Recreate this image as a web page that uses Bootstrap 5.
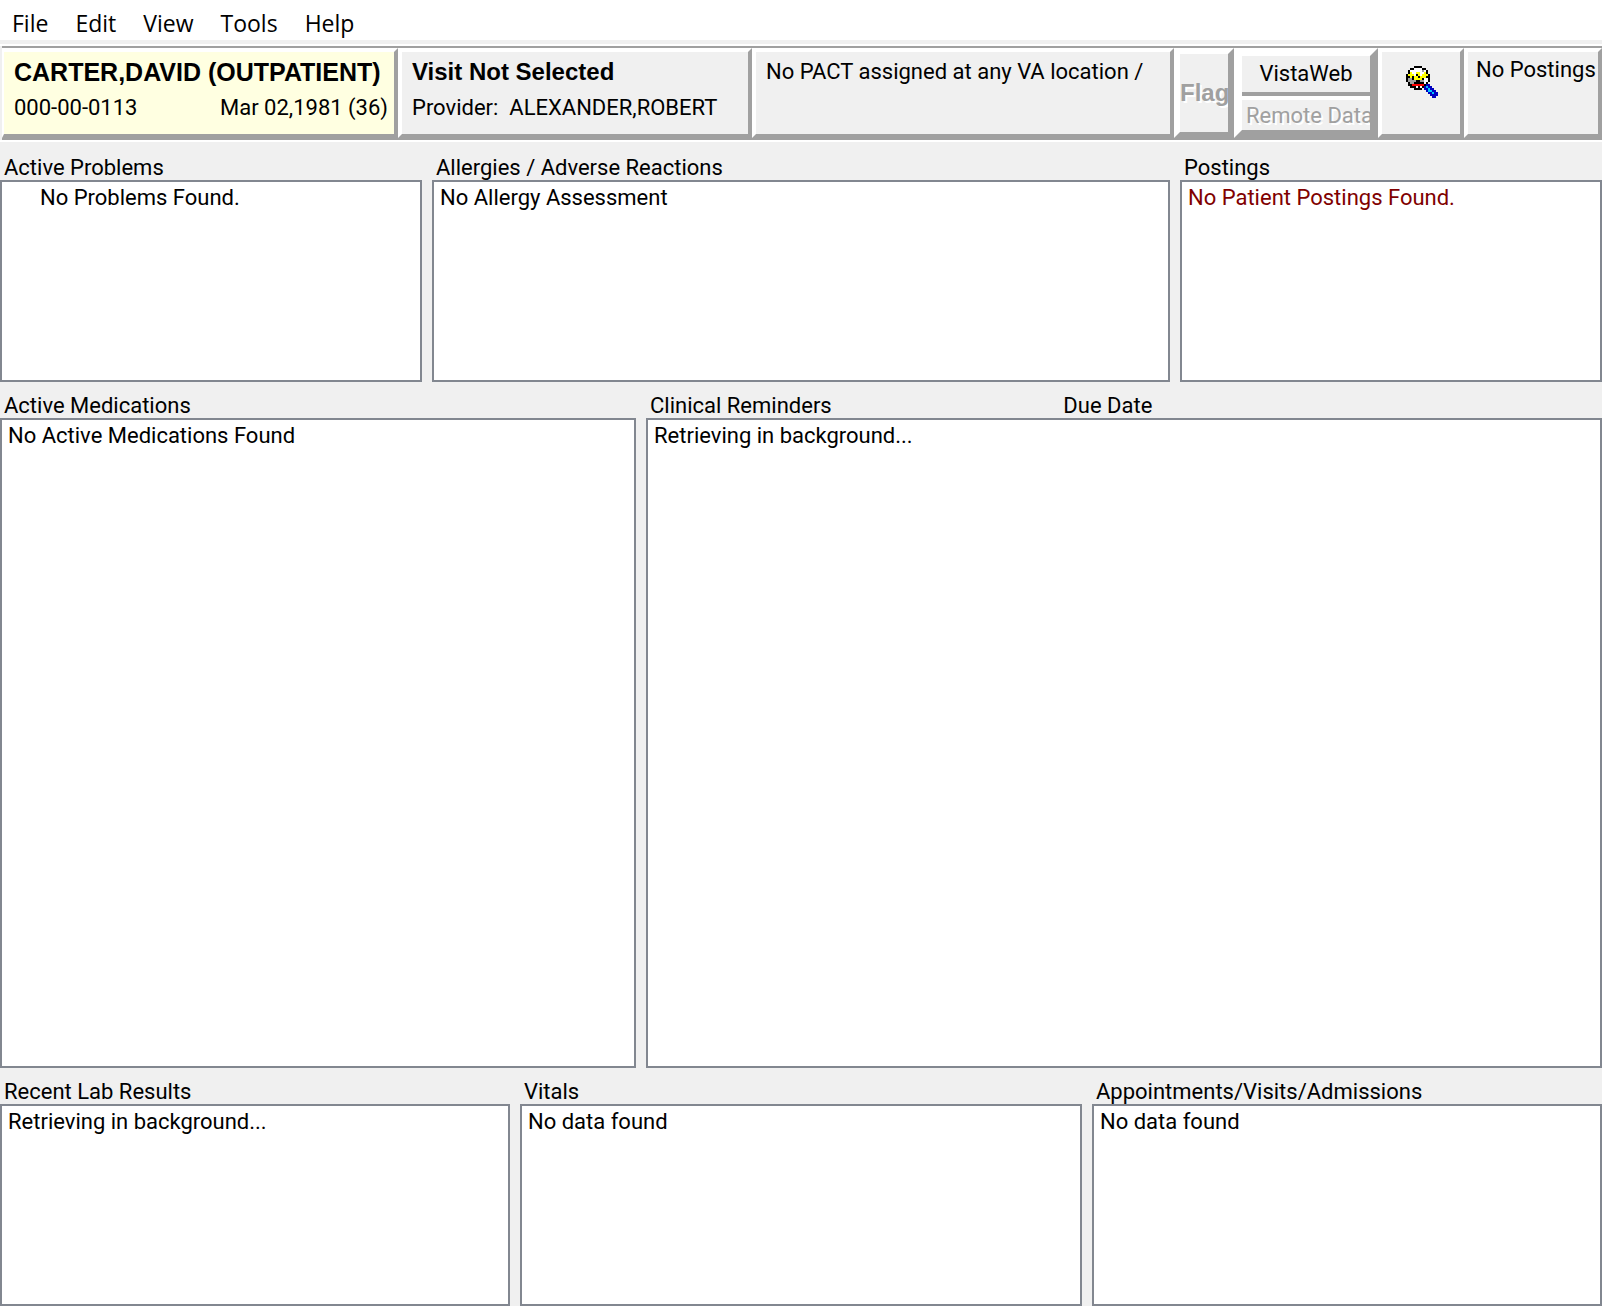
<!DOCTYPE html>
<html lang="en">
<head>
<meta charset="utf-8">
<meta name="viewport" content="width=device-width, initial-scale=1">
<title>Patient Chart - Cover Sheet</title>
<link rel="stylesheet" href="https://cdn.jsdelivr.net/npm/bootstrap@5.3.0/dist/css/bootstrap.min.css">
<style>
  body { background: #f0f0f0; color: #000; font-family: Roboto, "Liberation Sans", sans-serif; font-size: 22px; line-height: 28px; }
  .menu-bar { background: #fff; height: 40px; font-family: "Open Sans", sans-serif; font-size: 23px; line-height: 32px; padding: 7px 0 0 12px; gap: 27px; }
  .menu-bar a { color: #000; text-decoration: none; }
  .chart-bar { margin-top: 4px; border-top: 2px solid #fff; border-bottom: 2px solid #fff; }
  .chart-strip { border-top: 2px solid #a0a0a0; border-bottom: 2px solid #a0a0a0; height: 94px; margin-left: 2px; }
  .bevel { background: #f0f0f0; color: #000; border: 4px solid; border-color: #fff #a0a0a0 #a0a0a0 #fff; padding: 2px 10px 0; text-align: left; line-height: 36px; overflow: hidden; white-space: nowrap; flex: none; }
  .patient { background: #ffffe1; width: 396px; border-left-width: 2px; padding-right: 6px; }
  .visit { width: 354px; }
  .pact { flex: 1 1 0; }
  .strong-line { font-family: "Liberation Sans", sans-serif; font-weight: 700; font-size: 24px; }
  .patient-name { font-size: 25px; }
  .flag { width: 60px; border-width: 6px; padding: 0; }
  .remote { width: 144px; border-width: 8px; padding: 0; }
  .remote button { border: 0 solid; background: transparent; color: #000; padding: 0; width: 100%; overflow: hidden; white-space: nowrap; }
  .remote .web { border-bottom: 4px solid #a0a0a0; height: 40px; line-height: 36px; }
  .remote .data { border-top: 4px solid #fff; height: 34px; line-height: 32px; padding-left: 4px; text-align: left; }
  .bevel:disabled, .remote .data:disabled { color: #a0a0a0; text-shadow: 2px 2px 0 #fff; }
  .find { width: 86px; padding: 0 8px 0 10px; }
  .post { width: 138px; padding: 0 0 0 8px; }
  .pane { min-width: 0; display: flex; flex-direction: column; }
  .pane-title { font-size: 22px; line-height: 24px; font-weight: 400; margin: 0; height: 36px; padding-left: 4px; display: flex; align-items: flex-end; }
  .first .pane-title { height: 38px; }
  .pane-title span { flex: 1 1 0; }
  .pane-title .reminder { flex: 0 0 43%; margin-right: 4px; }
  .pane-box { background: #fff; border: 2px solid #828790; height: 202px; margin: 0; padding: 2px 6px; list-style: none; }
  .panes { gap: 10px; }
  .panes.grow .pane-box { height: auto; flex: 1 1 auto; }
  .grow { flex: 1 1 auto; }
  .w-side { flex: 422 1 0; } .w-mid { flex: 738 1 0; }
  .w-meds { flex: 636 1 0; } .w-rem { flex: 956 1 0; }
  .w-low { flex: 510 1 0; } .w-vit { flex: 562 1 0; }
  .dark-red { color: #800000; }
</style>
</head>
<body>
<div class="d-flex flex-column min-vh-100">
  <nav class="menu-bar d-flex" aria-label="Main menu">
    <a href="#">File</a><a href="#">Edit</a><a href="#">View</a><a href="#">Tools</a><a href="#">Help</a>
  </nav>
  <header class="chart-bar">
    <div class="chart-strip d-flex align-items-stretch">
      <button class="bevel patient d-flex flex-column" type="button">
        <span class="strong-line patient-name">CARTER,DAVID (OUTPATIENT)</span>
        <span class="d-flex justify-content-between w-100"><span>000-00-0113</span><span>Mar 02,1981 (36)</span></span>
      </button>
      <button class="bevel visit d-flex flex-column" type="button">
        <span class="strong-line">Visit Not Selected</span>
        <span>Provider: &nbsp;ALEXANDER,ROBERT</span>
      </button>
      <button class="bevel pact d-flex" type="button">No PACT assigned at any VA location /</button>
      <button class="bevel flag strong-line" type="button" disabled>Flag</button>
      <div class="bevel remote">
        <button class="web d-block" type="button">VistaWeb</button>
        <button class="data d-block" type="button" disabled>Remote Data</button>
      </div>
      <button class="bevel find d-flex justify-content-center" type="button" aria-label="Patient inquiry">
        <svg class="mt-2 flex-shrink-0" width="32" height="48" viewBox="0 -3 16 24" shape-rendering="crispEdges">
          <!-- lens -->
          <path fill="#fff" d="M3 1h6v1h1v2h1v5h-1v1h-1v1h-6v-1h-1v-1h-1v-5h1v-2h1z"/>
          <path d="M4 0h4v1H4zM2 1h2v1H2zM8 1h2v1H8zM1 2h1v2H1zM10 2h1v2h-1zM0 4h1v4H0zM11 4h1v4h-1zM1 8h1v2H1zM10 8h1v1h-1zM2 10h2v1H2zM8 10h1v1H8zM4 11h4v1H4z"/>
          <!-- face -->
          <path fill="#a0a0a0" d="M1 6h2v2H1zM9 5h1v1H9zM3 7h2v1H3zM7 7h2v1H7zM2 8h2v1H2zM8 2h1v1H8z"/>
          <path fill="#ff0" d="M2 3h1v1H2zM5 3h2v1H5zM9 3h1v1H9zM1 4h3v1H1zM5 4h2v1H5zM8 4h3v1H8zM2 5h8v1H2zM4 6h4v1H4z"/>
          <path d="M5 4h1v1H5zM3 5h1v1H3zM6 5h1v1H6zM1 5h1v1H1zM10 5h1v1h-1zM3 6h1v1H3zM8 6h1v1H8zM5 7h2v1H5zM4 8h5v1H4zM2 9h1v1H2zM9 9h1v1H9zM3 10h2v1H3zM6 10h1v1H6z"/>
          <path fill="#f00" d="M3 9h6v1H3z"/>
          <!-- handle -->
          <path fill="#0000c0" d="M10 9h2v1h1v1h1v1h1v1h1v2h-1v1h-2v-1h-1v-1h-1v-1h-1v-1h-1v-2h1z"/>
          <path fill="#00c8ff" d="M10 10h1v1h-1zM11 11h1v1h-1zM11 12h1v1h-1zM12 12h1v1h-1zM13 13h1v1h-1z"/>
        </svg>
      </button>
      <button class="bevel post d-flex" type="button">No Postings</button>
    </div>
  </header>
  <main class="grow d-flex flex-column">
    <div class="panes first d-flex">
      <section class="pane w-side"><h2 class="pane-title">Active Problems</h2><ul class="pane-box"><li class="ps-4 ms-2">No Problems Found.</li></ul></section>
      <section class="pane w-mid"><h2 class="pane-title">Allergies / Adverse Reactions</h2><ul class="pane-box"><li>No Allergy Assessment</li></ul></section>
      <section class="pane w-side"><h2 class="pane-title">Postings</h2><ul class="pane-box"><li class="dark-red">No Patient Postings Found.</li></ul></section>
    </div>
    <div class="panes grow d-flex">
      <section class="pane w-meds"><h2 class="pane-title">Active Medications</h2><ul class="pane-box"><li>No Active Medications Found</li></ul></section>
      <section class="pane w-rem"><h2 class="pane-title"><span class="reminder">Clinical Reminders</span><span>Due Date</span></h2><ul class="pane-box"><li>Retrieving in background...</li></ul></section>
    </div>
    <div class="panes d-flex">
      <section class="pane w-low"><h2 class="pane-title">Recent Lab Results</h2><ul class="pane-box"><li>Retrieving in background...</li></ul></section>
      <section class="pane w-vit"><h2 class="pane-title">Vitals</h2><ul class="pane-box"><li>No data found</li></ul></section>
      <section class="pane w-low"><h2 class="pane-title">Appointments/Visits/Admissions</h2><ul class="pane-box"><li>No data found</li></ul></section>
    </div>
  </main>
</div>
<script src="https://cdn.jsdelivr.net/npm/bootstrap@5.3.0/dist/js/bootstrap.bundle.min.js"></script>
</body>
</html>
